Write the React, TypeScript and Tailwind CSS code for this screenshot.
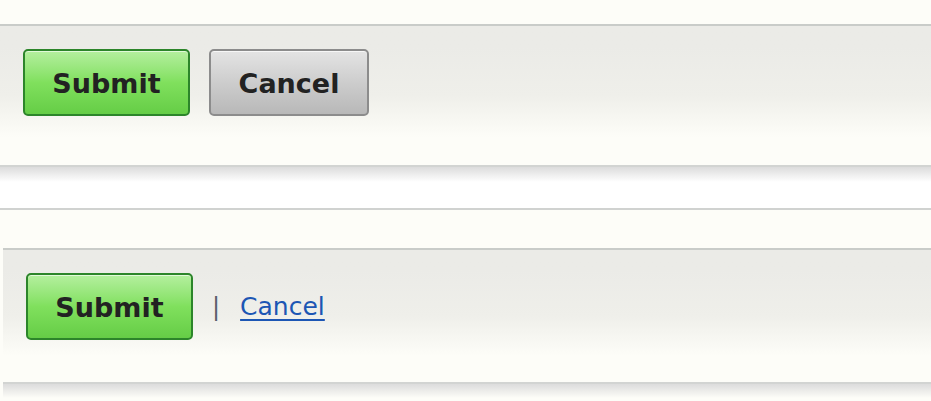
import React from "react";

const font = { fontFamily: '"DejaVu Sans", Verdana, sans-serif' };

function GreenButton() {
  return (
    <button
      className="h-[67px] w-[167px] rounded-[5px] border-2 border-[#2c852a] bg-gradient-to-b from-[#b4ef9e] via-[#80e05d] to-[#65cd46] pt-[3px] text-[27px] font-bold text-[#222] shadow-[inset_0_1px_0_rgba(255,255,255,0.6)]"
      style={font}
    >
      Submit
    </button>
  );
}

function GrayButton() {
  return (
    <button
      className="h-[67px] w-[160px] rounded-[5px] border-2 border-[#8c8c8c] bg-gradient-to-b from-[#e4e4e4] via-[#cdcdcd] to-[#b8b8b8] pt-[3px] text-[27px] font-bold text-[#222] shadow-[inset_0_1px_0_rgba(255,255,255,0.7)]"
      style={font}
    >
      Cancel
    </button>
  );
}

export default function App() {
  return (
    <div className="flex h-[401px] w-[931px] flex-col overflow-hidden bg-[#fdfdf8]">
      <div className="h-[24px] shrink-0" />
      <div className="h-[2px] shrink-0 bg-[#c9ccc9]" />
      <div className="flex h-[139px] shrink-0 items-start gap-[19px] bg-gradient-to-b from-[#ebebe7] from-15% via-[#efefea] via-50% to-[#fdfdf8] to-80% pl-[23px] pt-[23px]">
        <GreenButton />
        <GrayButton />
      </div>
      <div className="h-[2px] shrink-0 bg-[#d2d4d2]" />
      <div className="h-[15px] shrink-0 bg-gradient-to-b from-[#dcdcdc] to-[#ffffff]" />
      <div className="h-[26px] shrink-0 bg-white" />
      <div className="h-[2px] shrink-0 bg-[#d0d2d0]" />
      <div className="h-[38px] shrink-0 bg-[#fdfdf8]" />
      <div className="ml-[3px] flex shrink-0 flex-col">
        <div className="h-[2px] bg-[#c9ccc9]" />
        <div className="flex h-[132px] items-start bg-gradient-to-b from-[#ebebe7] from-15% via-[#efefea] via-50% to-[#fdfdf8] to-80% pl-[23px] pt-[23px]">
          <GreenButton />
          <div className="flex h-[66px] items-center pt-[2px]" style={font}>
            <span className="ml-[19px] text-[24px] text-[#5a5f6a]">|</span>
            <a href="#" className="ml-[20px] text-[25px] text-[#1c56b4] underline decoration-[2px] underline-offset-[4px]">
              Cancel
            </a>
          </div>
        </div>
        <div className="h-[2px] bg-[#d2d4d2]" />
        <div className="h-[14px] bg-gradient-to-b from-[#dcdcdc] to-[#fdfdf8]" />
      </div>
    </div>
  );
}
